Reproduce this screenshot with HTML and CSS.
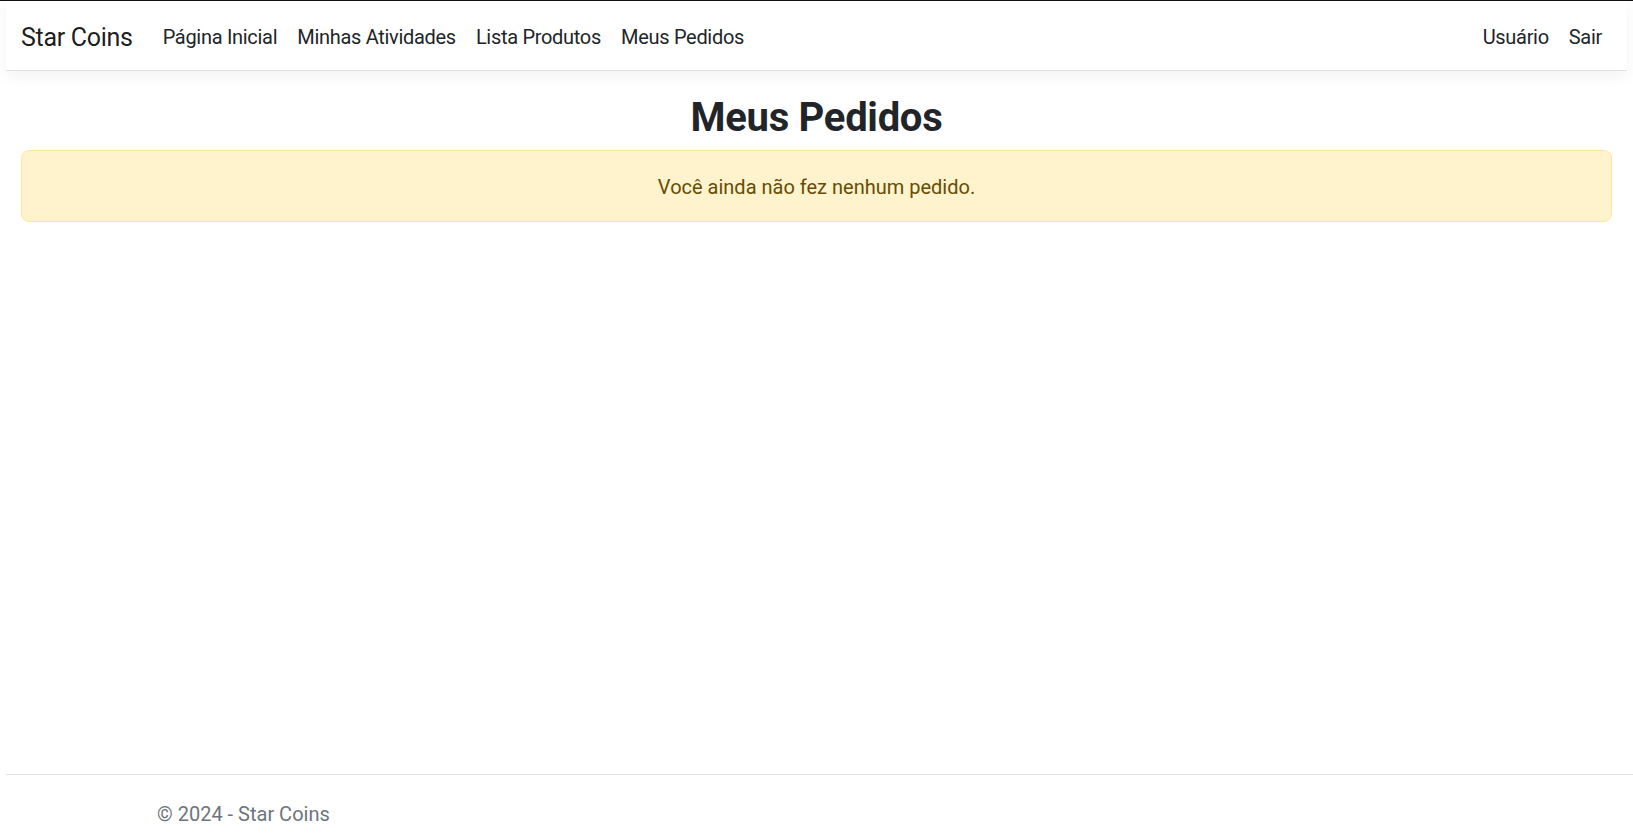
FILE: index.html
```html
<!DOCTYPE html>
<html lang="pt-BR">
<head>
<meta charset="utf-8">
<title>Meus Pedidos - Star Coins</title>
<link rel="stylesheet" href="styles.css">
</head>
<body>
<div class="frame-top"></div>
<header class="site-header">
  <nav class="navbar">
    <a class="brand" href="#">Star Coins</a>
    <ul class="nav-list">
      <li><a class="nav-link" href="#">Página Inicial</a></li>
      <li><a class="nav-link" href="#">Minhas Atividades</a></li>
      <li><a class="nav-link" href="#">Lista Produtos</a></li>
      <li><a class="nav-link" href="#">Meus Pedidos</a></li>
    </ul>
    <ul class="nav-list nav-right">
      <li><a class="nav-link" href="#">Usuário</a></li>
      <li><a class="nav-link" href="#">Sair</a></li>
    </ul>
  </nav>
</header>
<main class="content">
  <h1 class="page-title">Meus Pedidos</h1>
  <div class="alert-warning">Você ainda não fez nenhum pedido.</div>
</main>
<footer class="site-footer">
  <div class="footer-inner">&copy; 2024 - Star Coins</div>
</footer>
</body>
</html>
```

FILE: styles.css
```css
html, body {
  margin: 0;
  padding: 0;
  height: 100%;
}

body {
  font-family: Roboto, "Liberation Sans", sans-serif;
  font-size: 20px;
  line-height: 1.5;
  color: #212529;
  background: #ffffff;
  display: flex;
  flex-direction: column;
}

.frame-top {
  height: 1px;
  background: #111111;
  flex: none;
}

.site-header {
  margin: 0 6px;
  flex: none;
}

.navbar {
  box-sizing: border-box;
  height: 70px;
  display: flex;
  align-items: center;
  padding: 3px 15px 0;
  background: #ffffff;
  border-bottom: 1px solid #dee2e6;
  box-shadow: 0 5px 15px rgba(0, 0, 0, 0.05);
}

.brand {
  font-size: 25px;
  color: rgba(0, 0, 0, 0.9);
  text-decoration: none;
  margin-right: 20px;
  letter-spacing: -0.3px;
  padding-top: 1px;
}

.nav-list {
  display: flex;
  list-style: none;
  margin: 0;
  padding: 0;
}

.nav-right {
  margin-left: auto;
}

.nav-link {
  display: block;
  padding: 0 10px;
  color: #212529;
  text-decoration: none;
  letter-spacing: -0.3px;
}

.content {
  margin: 20px 6px 0;
  padding: 0 15px;
  flex: 1;
}

.page-title {
  margin: 0 0 8px;
  padding-top: 3px;
  font-size: 40px;
  font-weight: 700;
  line-height: 48px;
  text-align: center;
  letter-spacing: -0.3px;
}

.alert-warning {
  padding: 21px 20px 19px;
  background: #fff3cd;
  border: 1px solid #ffe69c;
  border-radius: 8px;
  color: #664d03;
  text-align: center;
  line-height: 30px;
}

.site-footer {
  margin-left: 6px;
  border-top: 1px solid #dee2e6;
  height: 65px;
  flex: none;
  color: #6c757d;
}

.footer-inner {
  padding-left: 151px;
  padding-top: 2px;
  line-height: 75px;
}
```
